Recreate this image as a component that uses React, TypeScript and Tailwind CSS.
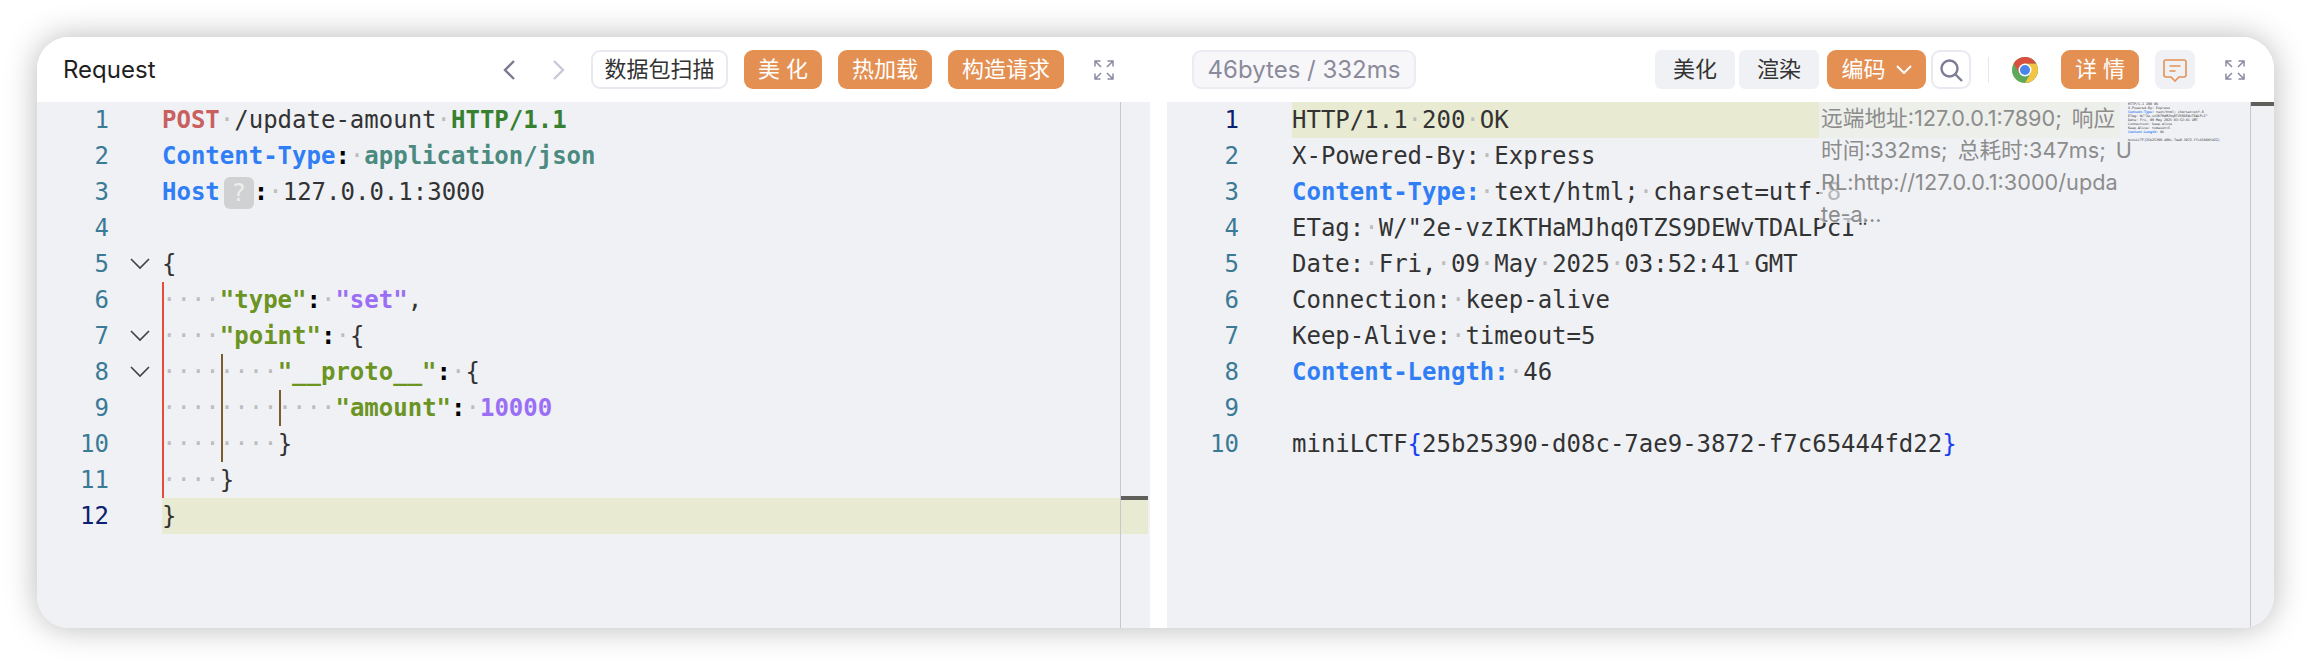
import React from "react";

type Part = [string, string?];
type CodeLine = { fold?: boolean; parts: Part[] };

const key = "font-bold text-[#6b9423]";
const val = "font-bold text-[#9a6ef5]";
const colon = "font-bold text-black";
const blue = "font-bold text-[#2f7ef5]";

const requestLines: CodeLine[] = [
  { parts: [["POST", "font-bold text-[#c96060]"], [" "], ["/update-amount"], [" "], ["HTTP/1.1", "font-bold text-[#37802f]"]] },
  { parts: [["Content-Type", blue], [":", colon], [" "], ["application/json", "font-bold text-[#4a8a7f]"]] },
  { parts: [["Host", blue], ["?", "badge"], [":", colon], [" "], ["127.0.0.1:3000"]] },
  { parts: [] },
  { fold: true, parts: [["{"]] },
  { parts: [["    "], ['"type"', key], [":", colon], [" "], ['"set"', val], [","]] },
  { fold: true, parts: [["    "], ['"point"', key], [":", colon], [" "], ["{"]] },
  { fold: true, parts: [["        "], ['"__proto__"', key], [":", colon], [" "], ["{"]] },
  { parts: [["            "], ['"amount"', key], [":", colon], [" "], ["10000", val]] },
  { parts: [["        "], ["}"]] },
  { parts: [["    "], ["}"]] },
  { parts: [["}"]] },
];

const responseLines: CodeLine[] = [
  { parts: [["HTTP/1.1 200 OK"]] },
  { parts: [["X-Powered-By: Express"]] },
  { parts: [["Content-Type:", blue], [" text/html; charset=utf-8"]] },
  { parts: [['ETag: W/"2e-vzIKTHaMJhq0TZS9DEWvTDALPcI"']] },
  { parts: [["Date: Fri, 09 May 2025 03:52:41 GMT"]] },
  { parts: [["Connection: keep-alive"]] },
  { parts: [["Keep-Alive: timeout=5"]] },
  { parts: [["Content-Length:", blue], [" 46"]] },
  { parts: [] },
  { parts: [["miniLCTF"], ["{", "text-[#1a3ff0]"], ["25b25390-d08c-7ae9-3872-f7c65444fd22"], ["}", "text-[#1a3ff0]"]] },
];

const tipLines = ["远端地址:127.0.0.1:7890; 响应", "时间:332ms; 总耗时:347ms; U", "RL:http://127.0.0.1:3000/upda", "te-a..."];

function Spaced({ text, className }: { text: string; className?: string }) {
  // editor shows whitespace as dots
  return (
    <>
      {text.split(/( )/).map((t, i) =>
        t === " " ? (
          <span key={i} className="text-[#bdbdbd]">
            ·
          </span>
        ) : (
          <span key={i} className={className}>
            {t}
          </span>
        ),
      )}
    </>
  );
}

function Line({ num, line, active }: { num: number; line: CodeLine; active?: boolean }) {
  return (
    <div className="flex h-[36px] leading-[36px] whitespace-pre text-[24px] text-[#333333]">
      <div className={`w-[72px] text-right ${active ? "text-[#0b216f]" : "text-[#3a7a96]"}`}>{num}</div>
      <div className="w-[53px] flex items-center pl-[21px]">
        {line.fold && (
          <svg width="20" height="12" viewBox="0 0 20 12" fill="none" stroke="#424242" strokeWidth="1.6">
            <path d="M1 1l9 9 9-9" />
          </svg>
        )}
      </div>
      <div className={`flex-1 ${active ? "bg-[#e8ebd2]" : ""}`}>
        {line.parts.map((p, i) =>
          p[1] === "badge" ? (
            <span
              key={i}
              className="inline-flex w-[30px] h-[32px] ml-[4px] align-middle items-center justify-center rounded-[6px] bg-[#d0d1d3] text-[#eeeeee] text-[24px]"
            >
              ?
            </span>
          ) : (
            <Spaced key={i} text={p[0]} className={p[1]} />
          ),
        )}
      </div>
    </div>
  );
}

function Expand() {
  return (
    <svg width="20" height="20" viewBox="0 0 20 20" fill="none" stroke="#8a8ba3" strokeWidth="1.5" className="shrink-0">
      <path d="M1 6.5V1h5.5M1 1l6 6M13.5 1H19v5.5M19 1l-6 6M1 13.5V19h5.5M1 19l6-6M19 13.5V19h-5.5M19 19l-6-6" />
    </svg>
  );
}

function Orange({ w, children }: { w: string; children: React.ReactNode }) {
  return (
    <button className={`${w} h-[39px] rounded-[9px] bg-[#e49053] text-white text-[22px] flex items-center justify-center shrink-0`}>
      {children}
    </button>
  );
}

function GrayBtn({ children }: { children: React.ReactNode }) {
  return (
    <button className="w-[80px] h-[39px] rounded-[6px] bg-[#f0f1f4] text-[#333333] text-[22px] flex items-center justify-center shrink-0">
      {children}
    </button>
  );
}

function Chrome() {
  return (
    <svg width="26" height="26" viewBox="0 0 24 24" className="shrink-0">
      <circle cx="12" cy="12" r="12" fill="#5fa85a" />
      <path d="M22.39 6A12 12 0 0 1 12 24l5.2-9L12 6z" fill="#f4c542" />
      <path d="M1.6 6a12 12 0 0 1 20.79 0H12l-5.2 9z" fill="#d9503f" />
      <circle cx="12" cy="12" r="6" fill="#ffffff" />
      <circle cx="12" cy="12" r="4.6" fill="#4a86e8" />
    </svg>
  );
}

export default function App() {
  return (
    <div className="w-[2310px] h-[664px] bg-white pt-[37px] pl-[37px] font-['Inter','Noto_Sans_CJK_SC',sans-serif]">
      <div className="w-[2237px] h-[591px] rounded-[32px] overflow-hidden flex bg-white shadow-[0_0_32px_rgba(0,0,0,0.28)]">
        {/* request */}
        <div className="w-[1113px] flex flex-col shrink-0">
          <div className="h-[65px] flex items-center pl-[26px] pr-[36px] bg-white">
            <span className="text-[24px] text-[#1f1f1f]">Request</span>
            <div className="ml-auto flex items-center">
              <svg width="12" height="20" viewBox="0 0 12 20" fill="none" stroke="#7a7a90" strokeWidth="2.4" className="mr-[38px]">
                <path d="M11 1L2 10l9 9" />
              </svg>
              <svg width="12" height="20" viewBox="0 0 12 20" fill="none" stroke="#c8c9d9" strokeWidth="2.4" className="mr-[26px]">
                <path d="M1 1l9 9-9 9" />
              </svg>
              <button className="w-[137px] h-[39px] rounded-[9px] bg-white border-2 border-[#e9e9f2] text-[#333333] text-[22px] flex items-center justify-center">
                数据包扫描
              </button>
              <div className="flex items-center gap-[16px] ml-[16px] mr-[30px]">
                <Orange w="w-[78px]">美 化</Orange>
                <Orange w="w-[94px]">热加载</Orange>
                <Orange w="w-[116px]">构造请求</Orange>
              </div>
              <Expand />
            </div>
          </div>
          <div className="relative flex-1 bg-[#f0f1f5] pr-[2px] font-['DejaVu_Sans_Mono',monospace]">
            {requestLines.map((l, i) => (
              <Line key={i} num={i + 1} line={l} active={i === 11} />
            ))}
            <div className="absolute left-[125px] top-[180px] w-[2px] h-[216px] bg-[#e84a3c]" />
            <div className="absolute left-[184px] top-[252px] w-[2px] h-[108px] bg-[#7a5c2e]" />
            <div className="absolute left-[242px] top-[288px] w-[2px] h-[36px] bg-[#7a5c2e]" />
            <div className="absolute right-[29px] top-0 bottom-0 w-px bg-[#c8c8cc]" />
            <div className="absolute right-[2px] top-[394px] w-[27px] h-[4px] bg-[#5f5f5b]" />
          </div>
        </div>

        <div className="w-[17px] shrink-0 bg-white" />

        {/* response */}
        <div className="flex-1 flex flex-col min-w-0">
          <div className="h-[65px] flex items-center pl-[25px] pr-[29px] bg-white">
            <span className="w-[224px] h-[39px] rounded-[9px] bg-[#f7f7f9] border-2 border-[#ebebf2] text-[#8a8a9a] text-[24px] flex items-center justify-center shrink-0">
              46bytes / 332ms
            </span>
            <div className="ml-auto flex items-center">
              <div className="flex items-center gap-[4px] mr-[8px]">
                <GrayBtn>美化</GrayBtn>
                <GrayBtn>渲染</GrayBtn>
              </div>
              <Orange w="w-[99px] gap-[10px]">
                编码
                <svg width="16" height="9" viewBox="0 0 16 9" fill="none" stroke="#ffffff" strokeWidth="2">
                  <path d="M1 1l7 7 7-7" />
                </svg>
              </Orange>
              <button className="w-[40px] h-[39px] ml-[5px] rounded-[9px] bg-white border-2 border-[#e9e9f2] flex items-center justify-center shrink-0">
                <svg width="24" height="24" viewBox="0 0 24 24" fill="none" stroke="#7c7d95" strokeWidth="2.4">
                  <circle cx="10.5" cy="10.5" r="8" />
                  <path d="M16.5 16.5L23 23" />
                </svg>
              </button>
              <div className="w-px h-[26px] bg-[#e6e6e6] ml-[17px] mr-[23px]" />
              <Chrome />
              <div className="ml-[23px] mr-[16px]">
                <Orange w="w-[78px]">详 情</Orange>
              </div>
              <button className="w-[40px] h-[39px] rounded-[8px] bg-[#f0f1f4] flex items-center justify-center shrink-0 mr-[30px]">
                <svg width="24" height="24" viewBox="0 0 24 24" fill="none" stroke="#e49053" strokeWidth="1.6">
                  <path d="M3 2h18a2 2 0 0 1 2 2v13a2 2 0 0 1-2 2h-5l-4 4-4-4H3a2 2 0 0 1-2-2V4a2 2 0 0 1 2-2z" />
                  <path d="M6.5 8h11M6.5 13h6" />
                </svg>
              </button>
              <Expand />
            </div>
          </div>
          <div className="relative flex-1 bg-[#f0f1f5] pr-[154px] font-['DejaVu_Sans_Mono',monospace]">
            {responseLines.map((l, i) => (
              <Line key={i} num={i + 1} line={l} active={i === 0} />
            ))}
            {/* hover tip over the code */}
            <div className="absolute left-[652px] top-0 w-[301px] h-[121px] pl-[2px] bg-[#f0f1f5]/70 text-[#8c8c8c] text-[21.7px] leading-[32px] [word-spacing:4px] whitespace-nowrap font-['Inter','Noto_Sans_CJK_SC',sans-serif]">
              {tipLines.map((t) => (
                <div key={t} className="h-[32px]">
                  {t}
                </div>
              ))}
            </div>
            {/* minimap */}
            <div className="absolute left-[961px] top-0 text-[3.32px] leading-[4px] whitespace-pre text-[#333333]">
              {responseLines.map((l, i) => (
                <div key={i} className="h-[4px]">
                  {l.parts.map((p, j) => (
                    <span key={j} className={p[1]}>
                      {p[0]}
                    </span>
                  ))}
                </div>
              ))}
            </div>
            <div className="absolute right-[23px] top-0 bottom-0 w-px bg-[#c8c8cc]" />
            <div className="absolute right-0 top-0 w-[23px] h-[4px] bg-[#5f5f5b]" />
          </div>
        </div>
      </div>
    </div>
  );
}
